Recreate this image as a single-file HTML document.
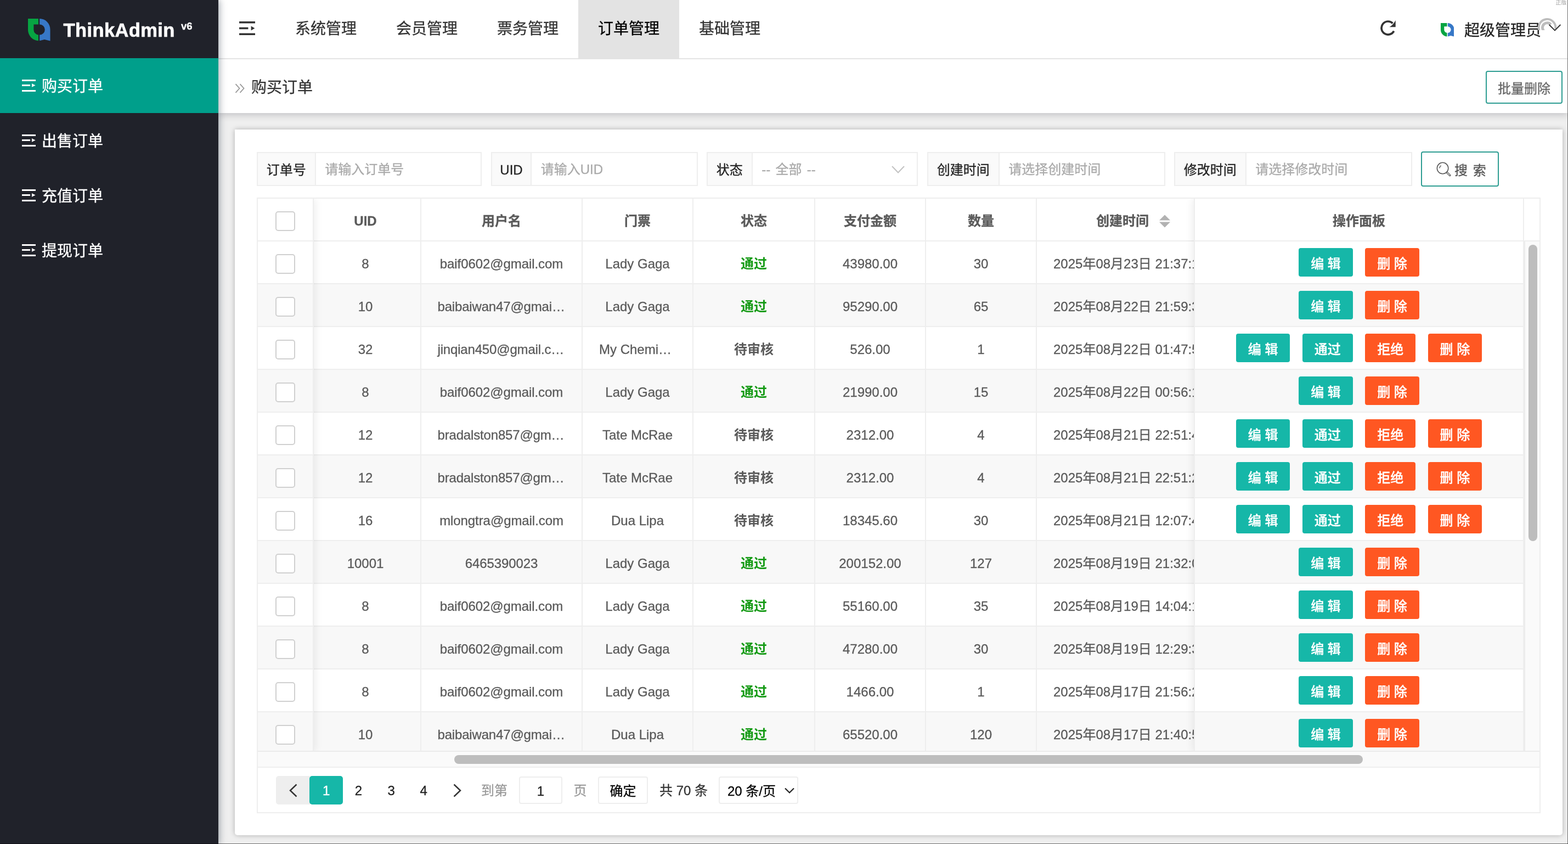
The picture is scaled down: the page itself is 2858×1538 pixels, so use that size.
<!DOCTYPE html>
<html lang="zh-CN">
<head>
<meta charset="utf-8">
<title>购买订单 · ThinkAdmin</title>
<style>
*{box-sizing:border-box;margin:0;padding:0}
html,body{width:2858px;height:1538px;overflow:hidden;background:#efefef}
body{will-change:transform;-webkit-text-stroke:.3px}
body{font-family:"Liberation Sans","Noto Sans CJK SC",sans-serif;font-size:24px;color:#333;position:relative;-webkit-font-smoothing:antialiased}
.abs{position:absolute}
.t{position:absolute;white-space:nowrap;line-height:40px;height:40px}
/* sidebar */
.side{position:absolute;left:0;top:0;width:398px;height:1538px;background:#20222a;z-index:30;box-shadow:2px 0 12px rgba(0,21,41,.36)}
.side .logo{position:absolute;left:51px;top:34px;width:40.5px;height:40.5px}
.side .brand{position:absolute;left:115.5px;top:27px;height:56px;line-height:56px;font-size:34.5px;font-weight:bold;color:#fff;letter-spacing:.4px;white-space:nowrap;-webkit-text-stroke:.6px #fff}
.side .brand sup{position:absolute;left:214.5px;top:-7px;font-size:18.5px;line-height:56px;letter-spacing:0;font-weight:bold;-webkit-text-stroke:.3px #fff}
.side .item{position:absolute;left:0;width:398px;height:100px;color:#fff;font-size:28px}
.side .item.on{background:#009f8b}
.side .item .mi{position:absolute;left:39.5px;top:39px;width:25px;height:22px}
.side .item span{position:absolute;left:76px;top:30px;line-height:44px;height:44px;white-space:nowrap}
/* header */
.head{position:absolute;left:398px;top:0;width:2460px;height:108px;background:#fff;border-bottom:2px solid #e4e4e4;z-index:10}
.head .ham{position:absolute;left:38px;top:39px;width:29px;height:25px}
.tab{position:absolute;top:0;width:184px;height:108px;text-align:center;font-size:28px;line-height:44px;padding-top:31px;color:#333;white-space:nowrap}
.tab.on{background:#e3e3e3;color:#000}
.head .refresh{position:absolute;left:2116.1px;top:35.1px;width:32px;height:32px}
.head .ava{position:absolute;left:2227.5px;top:42px;width:24.5px;height:24.5px}
.head .user{position:absolute;left:2271px;top:34px;font-size:28px;line-height:44px;color:#222;white-space:nowrap}
.head .arc{position:absolute;left:2403.7px;top:32.8px;width:36px;height:22px;overflow:hidden}
.head .chev{position:absolute;left:2424px;top:42.6px;width:24px;height:15px}
.head .zb{position:absolute;right:2.5px;top:-2.5px;font-size:10px;line-height:14px;color:#a5a5a5;white-space:nowrap;-webkit-text-stroke:0}
/* title bar */
.title{position:absolute;left:398px;top:108px;width:2460px;height:98px;background:#fff;z-index:9;box-shadow:0 3px 13px rgba(0,5,20,.2)}
.title .raq{position:absolute;left:30px;top:43.5px;width:18px;height:18px}
.title h1{position:absolute;left:60px;top:30px;font-size:28px;font-weight:normal;line-height:44px;color:#333;white-space:nowrap}
.title .btn{position:absolute;left:2310px;top:21px;width:140px;height:60px;border:2px solid #2e9d92;border-radius:4px;background:#fff;color:#666;font-size:24px;line-height:56px;text-align:center;padding-top:3px;white-space:nowrap}
/* card */
.card{position:absolute;left:428px;top:236px;width:2420px;height:1286px;background:#fff;border-radius:0 0 5px 5px;box-shadow:0 0 10px rgba(0,0,0,.27);z-index:5}
.grp{position:absolute;top:41px;height:62px;border:2px solid #eee;background:#fff}
.grp label{position:absolute;left:0;top:0;height:58px;background:#fafafa;border-right:2px solid #eee;text-align:center;line-height:58px;padding-top:2px;color:#222;font-size:24px;white-space:nowrap}
.grp .ph{position:absolute;top:0;height:58px;line-height:59px;color:#aaa;font-size:24px;white-space:nowrap}
.grp .dd{position:absolute;right:22px;top:23px;width:24px;height:14px}
.sbtn{position:absolute;left:2162px;top:40px;width:142px;height:64px;border:2px solid #2e9d92;border-radius:4px;color:#555;font-size:24px}
.sbtn svg{position:absolute;left:25.6px;top:16.8px;width:27px;height:27px}
.sbtn span{position:absolute;left:59px;top:0;line-height:60px;padding-top:3px;white-space:nowrap;word-spacing:3px}
/* table */
.tbl{position:absolute;left:40px;top:124px;width:2340px;height:1122px;border:2px solid #eee;background:#fff;overflow:hidden}
.row{position:absolute;left:0;width:2336px;height:78px;border-bottom:2px solid #eee;background:#fff}
.row.even{background:#f8f8f8}
.cell{position:absolute;top:0;height:76px;line-height:76px;font-size:24px;color:#5a5a5a;text-align:center;white-space:nowrap;overflow:hidden;border-right:2px solid #eee;padding-top:3px}
.cell.l{text-align:left}
.hd .cell{font-weight:bold;color:#5a5a5a;padding-top:3px}
.ok{color:#149a14;font-weight:bold;-webkit-text-stroke:0}
.wait{color:#5a5a5a;font-weight:bold;-webkit-text-stroke:0}
.ck{position:absolute;left:32px;top:23px;width:36px;height:36px;border:2px solid #d0d0d0;border-radius:5px;background:#fff}
.c0{left:0;width:102px}
.c1{left:96px;width:202px}
.c2{left:298px;width:294px;letter-spacing:-.08px}
.c3{left:592px;width:202px}
.c4{left:794px;width:222px}
.c5{left:1016px;width:202px}
.c6{left:1218px;width:202px}
.c7{left:1420px;width:360px;border-right:0;text-align:left;padding-left:30px}
.hd .c7{text-align:left;padding-left:108px}
.fl{position:absolute;left:0;top:0;width:102px;height:1007px;box-shadow:2px 0 14px rgba(0,0,0,.08);z-index:3;overflow:hidden;background:#fff}
.fr{position:absolute;left:1706px;top:0;width:602px;height:1007px;box-shadow:-2px 0 14px rgba(0,0,0,.08);z-index:3;overflow:hidden;background:#fff;border-left:2px solid #eee}
.fr .row{width:600px}
.fl .row{width:102px}
.fr .cell{left:0;width:600px;padding-top:0}
.fr .hd .cell{padding-top:3px}
.gut{position:absolute;left:2308px;top:0;width:28px;height:1007px;background:#fafafa;z-index:3;border-left:2px solid #ececec}
.gut .h{position:absolute;left:-2px;top:0;width:28px;height:78px;border-bottom:2px solid #eee;background:#fff}
.gut .th{position:absolute;left:6px;top:84px;width:16px;height:540px;border-radius:8px;background:#bdbdbd}
.b{display:inline-block;vertical-align:top;height:52px;margin-top:12px;line-height:57px;padding:0 22px;border-radius:4px;color:#fff;font-size:24px;font-weight:500}
.b+.b{margin-left:22.4px}
.b.g{background:#16b7a8}
.b.r{background:#ff5722}
.hs{position:absolute;left:0;top:1006px;width:2336px;height:29px;background:#fafafa;z-index:4;border-top:2px solid #ebebeb}
.hs i{position:absolute;left:358px;top:6px;width:1656px;height:16px;border-radius:8px;background:#bdbdbd}
.pg{position:absolute;left:0;top:1035px;width:2336px;height:83px;border-top:2px solid #eee;background:#fff;z-index:4;font-size:24px}
.pg .p{position:absolute;top:15px;height:52px;line-height:52px;padding-top:.5px;text-align:center;color:#222;white-space:nowrap}
.sort{position:absolute;left:1642px;top:28px;width:22px;height:26px}
.edge-r{position:absolute;left:2857px;top:0;width:1px;height:1538px;background:#6e6e6e;z-index:50}
.edge-b{position:absolute;left:0;top:1537px;width:2858px;height:1px;background:rgba(0,0,0,.55);z-index:50}
</style>
</head>
<body>
<aside class="side">
<svg class="logo" viewBox="0 0 40.5 40.5"><path fill="#07a442" d="M0 0H19V10.4H10.4V20.2A9.4 9.4 0 0 0 19 29.6V40.3A20 20 0 0 1 0 20.5Z"/><path fill="#3778c7" d="M21.2 0A19.6 19.6 0 0 1 40.5 20V40.5L30 38 21.2 40.3V29.6A9.6 9.6 0 0 0 21.2 10.4Z"/></svg>
<div class="brand">ThinkAdmin<sup>v6</sup></div>
<a class="item on" style="top:106px"><svg class="mi" viewBox="0 0 25 22"><path fill="#fff" d="M0 0H25V3H0ZM0 9H15V12H0ZM0 19H25V22H0ZM18 7.2 24.6 10.5 18 13.8Z"/></svg><span>购买订单</span></a>
<a class="item" style="top:206px"><svg class="mi" viewBox="0 0 25 22"><path fill="#fff" d="M0 0H25V3H0ZM0 9H15V12H0ZM0 19H25V22H0ZM18 7.2 24.6 10.5 18 13.8Z"/></svg><span>出售订单</span></a>
<a class="item" style="top:306px"><svg class="mi" viewBox="0 0 25 22"><path fill="#fff" d="M0 0H25V3H0ZM0 9H15V12H0ZM0 19H25V22H0ZM18 7.2 24.6 10.5 18 13.8Z"/></svg><span>充值订单</span></a>
<a class="item" style="top:406px"><svg class="mi" viewBox="0 0 25 22"><path fill="#fff" d="M0 0H25V3H0ZM0 9H15V12H0ZM0 19H25V22H0ZM18 7.2 24.6 10.5 18 13.8Z"/></svg><span>提现订单</span></a>
</aside>
<header class="head">
<svg class="ham" viewBox="0 0 29 25"><path fill="#333" d="M0 0H29V3.6H0ZM0 10.7H16.4V14.3H0ZM0 21.4H29V25H0ZM21.6 8.4 28.4 12.5 21.6 16.6Z"/></svg>
<a class="tab" style="left:104px">系统管理</a>
<a class="tab" style="left:288px">会员管理</a>
<a class="tab" style="left:472px">票务管理</a>
<a class="tab on" style="left:656px">订单管理</a>
<a class="tab" style="left:840px">基础管理</a>
<svg class="refresh" viewBox="0 0 32 32"><path fill="none" stroke="#333" stroke-width="3.7" d="M26.6 21.63A12 12 0 1 1 24.49 7.51"/><path fill="#333" d="M29.7 2.1V14.2H18.4Q25 11 29.7 2.1Z"/></svg>
<svg class="ava" viewBox="0 0 40.5 40.5"><path fill="#07a442" d="M0 0H19V10.4H10.4V20.2A9.4 9.4 0 0 0 19 29.6V40.3A20 20 0 0 1 0 20.5Z"/><path fill="#3778c7" d="M21.2 0A19.6 19.6 0 0 1 40.5 20V40.5L30 38 21.2 40.3V29.6A9.6 9.6 0 0 0 21.2 10.4Z"/></svg>
<span class="user">超级管理员</span>
<svg class="arc" viewBox="0 0 36 22"><path fill="none" stroke="#bdbdbd" stroke-width="3.8" d="M3.84 23A15.3 15.3 0 1 1 33.09 19.7"/><path fill="none" stroke="#bdbdbd" stroke-width="4.9" d="M11.58 23A8.65 8.65 0 1 1 24.63 11.64"/></svg>
<svg class="chev" viewBox="0 0 24 15"><path fill="none" stroke="#333" stroke-width="2" d="M1.6 2 12 12.4 22.4 2"/></svg>
<span class="zb">正版</span>
</header>
<div class="title">
<svg class="raq" viewBox="0 0 18 18"><path fill="none" stroke="#999" stroke-width="1.8" d="M1.5 1.2 8.5 9 1.5 16.8M9.5 1.2 16.5 9 9.5 16.8"/></svg>
<h1>购买订单</h1>
<a class="btn">批量删除</a>
</div>
<main class="card">
<div class="grp" style="left:40px;width:410px"><label style="width:105.5px">订单号</label><span class="ph" style="left:122.2px">请输入订单号</span></div>
<div class="grp" style="left:467px;width:377px"><label style="width:72px">UID</label><span class="ph" style="left:88.7px">请输入UID</span></div>
<div class="grp" style="left:860px;width:385px"><label style="width:81.5px">状态</label><span class="ph" style="left:98.2px;word-spacing:2.6px">-- 全部 --</span><svg class="dd" viewBox="0 0 24 14"><path fill="none" stroke="#c2c2c2" stroke-width="2" d="M1 1 12 12.5 23 1"/></svg></div>
<div class="grp" style="left:1262px;width:434px"><label style="width:129.5px">创建时间</label><span class="ph" style="left:146.2px">请选择创建时间</span></div>
<div class="grp" style="left:1712px;width:434px"><label style="width:129.5px">修改时间</label><span class="ph" style="left:146.2px">请选择修改时间</span></div>
<a class="sbtn"><svg viewBox="0 0 28 28"><circle cx="12" cy="12" r="10.6" fill="none" stroke="#555" stroke-width="1.6"/><path d="M6.2 12A5.8 5.8 0 0 1 9 7" fill="none" stroke="#555" stroke-width="1.4"/><path d="M20 20 25.6 25.4" stroke="#555" stroke-width="3.6" stroke-linecap="round"/><path d="M20.4 20.4 25.2 25" stroke="#fff" stroke-width="1.3" stroke-linecap="round"/></svg><span>搜 索</span></a>
<div class="tbl">
<div class="row hd" style="top:0"><div class="cell c1">UID</div><div class="cell c2">用户名</div><div class="cell c3">门票</div><div class="cell c4">状态</div><div class="cell c5">支付金额</div><div class="cell c6">数量</div><div class="cell c7">创建时间</div><svg class="sort" viewBox="0 0 22 26"><path fill="#b2b2b2" d="M11 1.5 21 11.5H1ZM1 14.5H21L11 24.5Z"/></svg></div>
<div class="row" style="top:78px"><div class="cell c1">8</div><div class="cell c2">baif0602@gmail.com</div><div class="cell c3">Lady Gaga</div><div class="cell c4 ok">通过</div><div class="cell c5">43980.00</div><div class="cell c6">30</div><div class="cell c7">2025年08月23日 21:37:11</div></div>
<div class="row even" style="top:156px"><div class="cell c1">10</div><div class="cell c2 l" style="padding-left:29.5px;letter-spacing:-.17px">baibaiwan47@gmai…</div><div class="cell c3">Lady Gaga</div><div class="cell c4 ok">通过</div><div class="cell c5">95290.00</div><div class="cell c6">65</div><div class="cell c7">2025年08月22日 21:59:31</div></div>
<div class="row" style="top:234px"><div class="cell c1">32</div><div class="cell c2 l" style="padding-left:29.5px;letter-spacing:-.17px">jinqian450@gmail.c…</div><div class="cell c3 l" style="padding-left:30px">My Chemi…</div><div class="cell c4 wait">待审核</div><div class="cell c5">526.00</div><div class="cell c6">1</div><div class="cell c7">2025年08月22日 01:47:51</div></div>
<div class="row even" style="top:312px"><div class="cell c1">8</div><div class="cell c2">baif0602@gmail.com</div><div class="cell c3">Lady Gaga</div><div class="cell c4 ok">通过</div><div class="cell c5">21990.00</div><div class="cell c6">15</div><div class="cell c7">2025年08月22日 00:56:11</div></div>
<div class="row" style="top:390px"><div class="cell c1">12</div><div class="cell c2 l" style="padding-left:29.5px;letter-spacing:-.17px">bradalston857@gm…</div><div class="cell c3">Tate McRae</div><div class="cell c4 wait">待审核</div><div class="cell c5">2312.00</div><div class="cell c6">4</div><div class="cell c7">2025年08月21日 22:51:41</div></div>
<div class="row even" style="top:468px"><div class="cell c1">12</div><div class="cell c2 l" style="padding-left:29.5px;letter-spacing:-.17px">bradalston857@gm…</div><div class="cell c3">Tate McRae</div><div class="cell c4 wait">待审核</div><div class="cell c5">2312.00</div><div class="cell c6">4</div><div class="cell c7">2025年08月21日 22:51:21</div></div>
<div class="row" style="top:546px"><div class="cell c1">16</div><div class="cell c2">mlongtra@gmail.com</div><div class="cell c3">Dua Lipa</div><div class="cell c4 wait">待审核</div><div class="cell c5">18345.60</div><div class="cell c6">30</div><div class="cell c7">2025年08月21日 12:07:41</div></div>
<div class="row even" style="top:624px"><div class="cell c1">10001</div><div class="cell c2">6465390023</div><div class="cell c3">Lady Gaga</div><div class="cell c4 ok">通过</div><div class="cell c5">200152.00</div><div class="cell c6">127</div><div class="cell c7">2025年08月19日 21:32:01</div></div>
<div class="row" style="top:702px"><div class="cell c1">8</div><div class="cell c2">baif0602@gmail.com</div><div class="cell c3">Lady Gaga</div><div class="cell c4 ok">通过</div><div class="cell c5">55160.00</div><div class="cell c6">35</div><div class="cell c7">2025年08月19日 14:04:11</div></div>
<div class="row even" style="top:780px"><div class="cell c1">8</div><div class="cell c2">baif0602@gmail.com</div><div class="cell c3">Lady Gaga</div><div class="cell c4 ok">通过</div><div class="cell c5">47280.00</div><div class="cell c6">30</div><div class="cell c7">2025年08月19日 12:29:31</div></div>
<div class="row" style="top:858px"><div class="cell c1">8</div><div class="cell c2">baif0602@gmail.com</div><div class="cell c3">Lady Gaga</div><div class="cell c4 ok">通过</div><div class="cell c5">1466.00</div><div class="cell c6">1</div><div class="cell c7">2025年08月17日 21:56:21</div></div>
<div class="row even" style="top:936px"><div class="cell c1">10</div><div class="cell c2 l" style="padding-left:29.5px;letter-spacing:-.17px">baibaiwan47@gmai…</div><div class="cell c3">Dua Lipa</div><div class="cell c4 ok">通过</div><div class="cell c5">65520.00</div><div class="cell c6">120</div><div class="cell c7">2025年08月17日 21:40:51</div></div>
<div class="fl">
<div class="row hd" style="top:0"><div class="cell c0"><i class="ck"></i></div></div>
<div class="row" style="top:78px"><div class="cell c0"><i class="ck"></i></div></div>
<div class="row even" style="top:156px"><div class="cell c0"><i class="ck"></i></div></div>
<div class="row" style="top:234px"><div class="cell c0"><i class="ck"></i></div></div>
<div class="row even" style="top:312px"><div class="cell c0"><i class="ck"></i></div></div>
<div class="row" style="top:390px"><div class="cell c0"><i class="ck"></i></div></div>
<div class="row even" style="top:468px"><div class="cell c0"><i class="ck"></i></div></div>
<div class="row" style="top:546px"><div class="cell c0"><i class="ck"></i></div></div>
<div class="row even" style="top:624px"><div class="cell c0"><i class="ck"></i></div></div>
<div class="row" style="top:702px"><div class="cell c0"><i class="ck"></i></div></div>
<div class="row even" style="top:780px"><div class="cell c0"><i class="ck"></i></div></div>
<div class="row" style="top:858px"><div class="cell c0"><i class="ck"></i></div></div>
<div class="row even" style="top:936px"><div class="cell c0"><i class="ck"></i></div></div>
</div>
<div class="fr">
<div class="row hd" style="top:0"><div class="cell">操作面板</div></div>
<div class="row" style="top:78px"><div class="cell"><a class="b g">编 辑</a><a class="b r">删 除</a></div></div>
<div class="row even" style="top:156px"><div class="cell"><a class="b g">编 辑</a><a class="b r">删 除</a></div></div>
<div class="row" style="top:234px"><div class="cell"><a class="b g">编 辑</a><a class="b g">通过</a><a class="b r">拒绝</a><a class="b r">删 除</a></div></div>
<div class="row even" style="top:312px"><div class="cell"><a class="b g">编 辑</a><a class="b r">删 除</a></div></div>
<div class="row" style="top:390px"><div class="cell"><a class="b g">编 辑</a><a class="b g">通过</a><a class="b r">拒绝</a><a class="b r">删 除</a></div></div>
<div class="row even" style="top:468px"><div class="cell"><a class="b g">编 辑</a><a class="b g">通过</a><a class="b r">拒绝</a><a class="b r">删 除</a></div></div>
<div class="row" style="top:546px"><div class="cell"><a class="b g">编 辑</a><a class="b g">通过</a><a class="b r">拒绝</a><a class="b r">删 除</a></div></div>
<div class="row even" style="top:624px"><div class="cell"><a class="b g">编 辑</a><a class="b r">删 除</a></div></div>
<div class="row" style="top:702px"><div class="cell"><a class="b g">编 辑</a><a class="b r">删 除</a></div></div>
<div class="row even" style="top:780px"><div class="cell"><a class="b g">编 辑</a><a class="b r">删 除</a></div></div>
<div class="row" style="top:858px"><div class="cell"><a class="b g">编 辑</a><a class="b r">删 除</a></div></div>
<div class="row even" style="top:936px"><div class="cell"><a class="b g">编 辑</a><a class="b r">删 除</a></div></div>
</div>
<div class="gut"><div class="h"></div><i class="th"></i></div>
<div class="hs"><i></i></div>
<div class="pg">
<a class="p" style="left:32.5px;width:62px;background:#eee;border-radius:5px 0 0 5px"><svg style="position:absolute;left:24px;top:14px;width:15px;height:25px" viewBox="0 0 15 25"><path fill="none" stroke="#333" stroke-width="2.5" d="M13.5 1.5 2 12.5 13.5 23.5"/></svg></a>
<span class="p" style="left:94.3px;width:61px;background:#16b7a8;color:#fff;border-radius:5px">1</span>
<a class="p" style="left:153.4px;width:60px">2</a>
<a class="p" style="left:213.2px;width:60px">3</a>
<a class="p" style="left:272.2px;width:60px">4</a>
<a class="p" style="left:333px;width:60px"><svg style="position:absolute;left:23px;top:14px;width:15px;height:25px" viewBox="0 0 15 25"><path fill="none" stroke="#333" stroke-width="2.5" d="M1.5 1.5 13 12.5 1.5 23.5"/></svg></a>
<span class="p" style="left:407px;color:#999">到第</span>
<span class="p" style="left:476px;width:79px;border:2px solid #eee;border-radius:4px;line-height:48px;top:16px;height:50px">1</span>
<span class="p" style="left:575.5px;color:#999">页</span>
<a class="p" style="left:620px;width:91px;border:2px solid #eee;border-radius:4px;line-height:48px;top:16px;height:50px;color:#000">确定</a>
<span class="p" style="left:732px;color:#333">共 70 条</span>
<span class="p" style="left:840px;width:145px;border:2px solid #eee;border-radius:4px;line-height:48px;top:16px;height:50px;color:#000;text-align:left;padding-left:14px">20 条/页<svg style="position:absolute;left:118px;top:18px;width:18px;height:12px" viewBox="0 0 18 12"><path fill="none" stroke="#222" stroke-width="2.2" d="M1 1.5 9 9.5 17 1.5"/></svg></span>
</div>
</div>
</main>
<div class="edge-r"></div><div class="edge-b"></div>
</body>
</html>
